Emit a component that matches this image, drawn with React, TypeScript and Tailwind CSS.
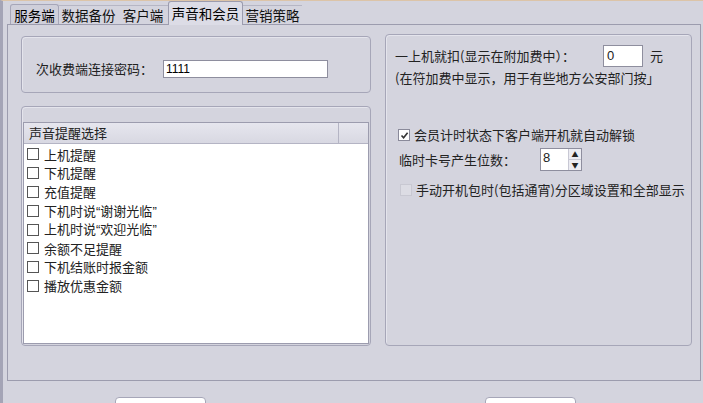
import React from 'react';

/* ------------------------------- Small parts ------------------------------- */

const font = "font-['Noto_Sans_CJK_SC','Microsoft_YaHei',sans-serif]";

const Tab: React.FC<{ label: string; w: string; active?: boolean; first?: boolean }> = ({ label, w, active, first }) => (
  <div
    className={
      active
        ? `${w} relative z-10 h-[24px] mt-[0px] flex items-center justify-center bg-[#dcdce6] border border-b-0 border-[#9c9cae] rounded-t-[3px] text-[13.5px] text-black`
        : first
        ? `${w} h-[21px] mt-[3px] flex items-center justify-center text-[13.5px] bg-[#cfcfda] border border-b-0 border-[#a6a6b8] rounded-t-[3px]`
        : `${w} h-[20px] mt-[4px] flex items-center justify-center text-[13.5px] text-[#111] border-t border-[#b6b6c4]`
    }
  >
    {label}
  </div>
);

const Box: React.FC<{ className?: string; children?: React.ReactNode }> = ({ className = '', children }) => (
  <div className={`border border-[#a6a6b8] rounded-[4px] shadow-[inset_1px_1px_0_#e4e4ec] ${className}`}>
    {children}
  </div>
);

const Check: React.FC<{ checked?: boolean; disabled?: boolean }> = ({ checked, disabled }) => (
  <span
    className={`inline-flex shrink-0 w-[12px] h-[12px] items-center justify-center border ${
      disabled ? 'border-[#c8c8d2] bg-[#dcdce4]' : checked ? 'border-[#8a8a9a] bg-white' : 'border-[#555] bg-white'
    }`}
  >
    {checked && (
      <svg width="9" height="9" viewBox="0 0 9 9">
        <path d="M1.5 4.5 L3.6 6.8 L7.6 1.8" stroke="#333" strokeWidth="1.6" fill="none" />
      </svg>
    )}
  </span>
);

const Q: React.FC<{ c: string }> = ({ c }) => (
  <span className="font-['Liberation_Sans',sans-serif]">{c}</span>
);

/* --------------------------------- Data --------------------------------- */

const sounds: React.ReactNode[] = [
  '上机提醒',
  '下机提醒',
  '充值提醒',
  <>下机时说<Q c="“" />谢谢光临<Q c="”" /></>,
  <>上机时说<Q c="“" />欢迎光临<Q c="”" /></>,
  '余额不足提醒',
  '下机结账时报金额',
  '播放优惠金额',
];

/* --------------------------------- Render --------------------------------- */

export default function App() {
  return (
    <div className={`${font} w-[703px] h-[403px] overflow-hidden bg-[#d4d4de] border-l-[3px] border-l-[#a4a4b6] border-t border-t-[#dcc4a8] flex flex-col`}>
      {/* Tabs */}
      <div className="flex pl-[7px] h-[23px] shrink-0 items-start">
        <Tab label="服务端" w="w-[49px]" first />
        <Tab label="数据备份" w="w-[59px]" />
        <Tab label="客户端" w="w-[50px]" />
        <Tab label="声音和会员" w="w-[75px]" active />
        <Tab label="营销策略" w="w-[59px]" />
      </div>

      {/* Tab page */}
      <div className="shrink-0 ml-[4px] mr-[2px] h-[357px] border border-[#9c9cae] bg-[#d4d4de] flex gap-[14px] pl-[13px] pr-[4px] pt-[9px]">
        {/* Left column */}
        <div className="w-[350px] flex flex-col pt-[2px]">
          <Box className="h-[57px] flex items-center pl-[14px] pt-[8px]">
            <span className="text-[13px] text-[#222] w-[127px]">次收费端连接密码：</span>
            <div className="w-[165px] h-[18px] bg-white border border-[#8e8e9e] px-[2px] flex items-center text-[12px] font-['Liberation_Sans',sans-serif] leading-none">
              1111
            </div>
          </Box>

          <Box className="mt-[13px] h-[240px] pt-[15px] px-[1px] pb-[1px] flex">
            <div className="flex-1 flex flex-col bg-white border border-[#9c9cae]">
              <div className="h-[21px] shrink-0 flex bg-gradient-to-b from-[#e6e6ee] to-[#d8d8e2] border-b border-[#b4b4c4] text-[13px] text-[#222]">
                <div className="w-[315px] pl-[5px] flex items-center border-r border-[#b4b4c4]">声音提醒选择</div>
                <div className="flex-1" />
              </div>
              <div className="pt-[1px] pl-[3px]">
                {sounds.map((s, i) => (
                  <div key={i} className="h-[18.8px] flex items-center gap-[5px] text-[13px] text-[#222]">
                    <Check />
                    <span>{s}</span>
                  </div>
                ))}
              </div>
            </div>
          </Box>
        </div>

        {/* Right column */}
        <Box className="w-[307px] h-[312px] pl-[9px] pt-[10px] text-[13px] text-[#222]">
          <div className="flex items-center h-[22px]">
            <span className="w-[208px]">一上机就扣(显示在附加费中）：</span>
            <div className="w-[40px] h-[22px] bg-white border border-[#8e8e9e] pl-[3px] flex items-center font-['Liberation_Sans',sans-serif] text-[13px]">
              0
            </div>
            <span className="ml-[7px]">元</span>
          </div>
          <div className="mt-[1px] h-[20px] flex items-center">(在符加费中显示，用于有些地方公安部门按」</div>

          <div className="mt-[38px] h-[18px] flex items-center gap-[4px] pl-[3px]">
            <Check checked />
            <span>会员计时状态下客户端开机就自动解锁</span>
          </div>

          <div className="mt-[4px] flex items-center pl-[4px]">
            <span className="w-[141px]">临时卡号产生位数：</span>
            <div className="w-[42px] h-[23px] bg-white border border-[#8e8e9e] flex">
              <span className="flex-1 pl-[2px] font-['Liberation_Sans',sans-serif] text-[13px] leading-[18px]">8</span>
              <div className="w-[13px] flex flex-col border-l border-[#c8c8d4] bg-[#ececf2]">
                <div className="flex-1 flex items-center justify-center text-[7px] leading-none border-b border-[#c8c8d4]">▲</div>
                <div className="flex-1 flex items-center justify-center text-[7px] leading-none">▼</div>
              </div>
            </div>
          </div>

          <div className="mt-[10px] h-[18px] flex items-center gap-[4px] pl-[5px]">
            <Check disabled />
            <span>手动开机包时(包括通宵)分区域设置和全部显示</span>
          </div>
        </Box>
      </div>

      {/* Buttons (cut off at bottom) */}
      <div className="flex pt-[16px] pl-[112px]">
        <div className="w-[91px] h-[24px] bg-white border border-[#a6a6b8] rounded-[4px]" />
        <div className="ml-[279px] w-[91px] h-[24px] bg-white border border-[#a6a6b8] rounded-[4px]" />
      </div>
    </div>
  );
}
